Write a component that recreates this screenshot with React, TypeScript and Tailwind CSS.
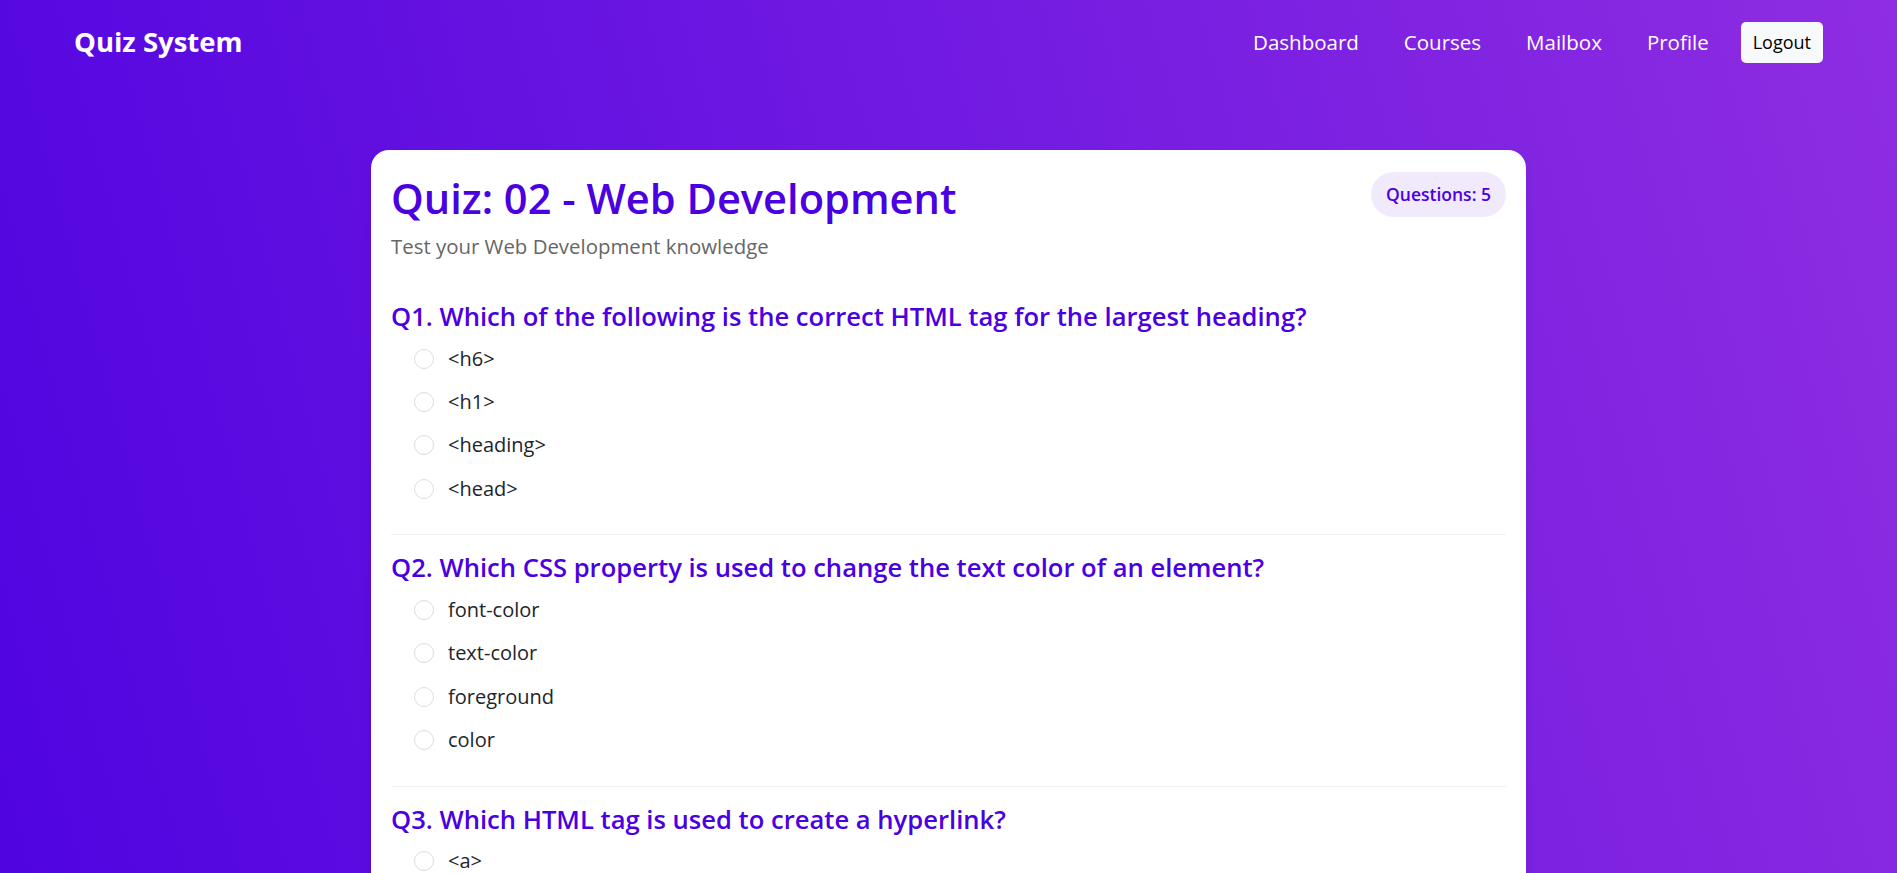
import React from 'react';

const questions = [
  {
    id: 1,
    text: 'Which of the following is the correct HTML tag for the largest heading?',
    options: ['<h6>', '<h1>', '<heading>', '<head>'],
  },
  {
    id: 2,
    text: 'Which CSS property is used to change the text color of an element?',
    options: ['font-color', 'text-color', 'foreground', 'color'],
  },
  {
    id: 3,
    text: 'Which HTML tag is used to create a hyperlink?',
    options: ['<a>', '<link>', '<href>', '<url>'],
  },
  {
    id: 4,
    text: 'Which JavaScript method is used to select an element by its id?',
    options: ['getElementById()', 'querySelectorAll()', 'getElementsByName()', 'selectId()'],
  },
  {
    id: 5,
    text: 'Which of the following is a JavaScript library for building user interfaces?',
    options: ['Django', 'React', 'Laravel', 'Flask'],
  },
];

const navLinks = ['Dashboard', 'Courses', 'Mailbox', 'Profile'];

function Navbar() {
  return (
    <header className="h-[84px] px-[74px] flex items-center justify-between">
      <span className="text-[27.5px] font-bold text-white">Quiz System</span>
      <nav className="flex items-center">
        <ul className="flex items-center gap-[45px]">
          {navLinks.map((link) => (
            <li key={link}>
              <a href="#" className="text-[20.5px] text-white">
                {link}
              </a>
            </li>
          ))}
        </ul>
        <button className="ml-[32px] h-[41px] px-[12px] rounded-[5px] bg-[#f8f9fa] text-[18px] text-black">
          Logout
        </button>
      </nav>
    </header>
  );
}

function Question({ q }: { q: (typeof questions)[number] }) {
  return (
    <div className="pb-[24px] mb-[18px] border-b border-[#f0f0f2]">
      <h3 className="text-[25.6px] leading-[30px] font-semibold text-[#4a00e0] mb-[5px]">
        Q{q.id}. {q.text}
      </h3>
      <div className="flex flex-col">
        {q.options.map((opt) => (
          <label key={opt} className="h-[43.33px] pl-[23px] flex items-center gap-[14px] cursor-pointer">
            <span className="w-[20px] h-[20px] rounded-full border border-[#dcdde2] bg-white shrink-0" />
            <span className="text-[20px] text-[#212529]">{opt}</span>
          </label>
        ))}
      </div>
    </div>
  );
}

export default function App() {
  return (
    <div className="min-h-screen bg-[linear-gradient(75deg,#4a00e0,#8e2de2)] font-['Open_Sans',sans-serif] pb-[60px]">
      <Navbar />
      <main className="mt-[66px] w-[1155px] mx-auto bg-white rounded-[18px] px-[20px] pt-[24px] pb-[20px] shadow-lg">
        <div className="flex items-start justify-between mb-[41px]">
          <div>
            <h1 className="text-[41.6px] leading-[48px] font-semibold text-[#4a00e0]">
              Quiz: 02 - Web Development
            </h1>
            <p className="mt-[9px] text-[20.4px] leading-[30px] text-[#666]">
              Test your Web Development knowledge
            </p>
          </div>
          <span className="-mt-[2px] h-[45px] px-[15px] flex items-center rounded-full bg-[#f1eafd] text-[17.5px] font-semibold text-[#4a00e0]">
            Questions: 5
          </span>
        </div>
        {questions.map((q) => (
          <Question key={q.id} q={q} />
        ))}
      </main>
    </div>
  );
}
